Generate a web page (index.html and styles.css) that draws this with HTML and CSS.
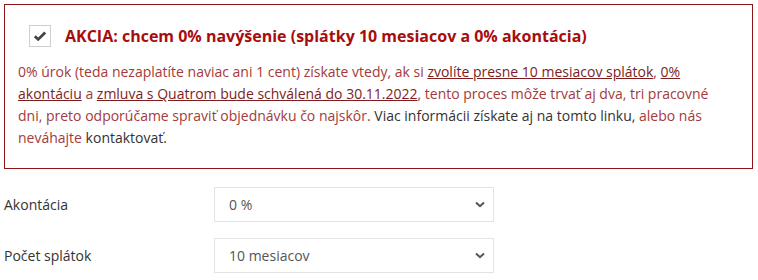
FILE: index.html
```html
<!DOCTYPE html>
<html lang="sk">
<head>
<meta charset="utf-8">
<link rel="stylesheet" href="styles.css">
</head>
<body>
<div class="page">
  <div class="promo">
    <div class="promo-head">
      <span class="check">
        <svg width="14" height="12" viewBox="0 0 14 12"><path d="M1.8 6.2 L5.2 9.4 L12.2 2.6" fill="none" stroke="#444" stroke-width="2.8" stroke-linecap="butt" stroke-linejoin="miter"/></svg>
      </span>
      <span class="promo-title">AKCIA: chcem 0% navýšenie (splátky 10 mesiacov a 0% akontácia)</span>
    </div>
    <p class="promo-text">0% úrok (teda nezaplatíte naviac ani 1 cent) získate vtedy, ak si <a href="#">zvolíte presne 10 mesiacov splátok</a>, <a href="#">0% akontáciu</a> a <a href="#">zmluva s Quatrom bude schválená do 30.11.2022</a>, tento proces môže trvať aj dva, tri pracovné dni, preto odporúčame spraviť objednávku čo najskôr. <span class="dark">Viac informácii získate aj na tomto linku,</span> alebo nás neváhajte <span class="dark">kontaktovať.</span></p>
  </div>
  <div class="form">
    <div class="form-row">
      <label class="form-label">Akontácia</label>
      <div class="select"><span>0 %</span>
        <svg width="10" height="7" viewBox="0 0 10 7"><path d="M1 1.5 L5 5.2 L9 1.5" fill="none" stroke="#555" stroke-width="2"/></svg>
      </div>
    </div>
    <div class="form-row">
      <label class="form-label">Počet splátok</label>
      <div class="select"><span>10 mesiacov</span>
        <svg width="10" height="7" viewBox="0 0 10 7"><path d="M1 1.5 L5 5.2 L9 1.5" fill="none" stroke="#555" stroke-width="2"/></svg>
      </div>
    </div>
  </div>
</div>
</body>
</html>
```

FILE: styles.css
```css
html, body {
  margin: 0;
  padding: 0;
  background: #fff;
}
body {
  font-family: "Open Sans", "Liberation Sans", sans-serif;
  color: #333;
  font-size: 14px;
}
.page {
  padding: 4px 0 0 4px;
  width: 749px;
}
.promo {
  border: 1px solid #8e1616;
  padding: 20px 28px 19px 13px;
}
.promo-head {
  display: flex;
  align-items: center;
  gap: 14px;
  padding-left: 11px;
}
.check {
  width: 20px;
  height: 20px;
  border: 1px solid #cfcfcf;
  background: #fff;
  display: flex;
  align-items: center;
  justify-content: center;
  flex: none;
}
.promo-title {
  font-weight: 700;
  font-size: 16px;
  color: #a80d0d;
  line-height: 22px;
}
.promo-text {
  margin: 14px 0 0 0;
  line-height: 22px;
  color: #a43a3a;
}
.promo-text a {
  color: #7d1d1d;
  text-decoration: underline;
}
.promo-text .dark {
  color: #333;
}
.form {
  margin-top: 18px;
  display: flex;
  flex-direction: column;
  gap: 16px;
}
.form-row {
  display: flex;
  align-items: center;
}
.form-label {
  width: 210px;
  color: #333;
}
.select {
  width: 256px;
  height: 33px;
  border: 1px solid #e3e3e3;
  display: flex;
  align-items: center;
  justify-content: space-between;
  padding: 0 8px 0 14px;
  color: #555;
}
```
